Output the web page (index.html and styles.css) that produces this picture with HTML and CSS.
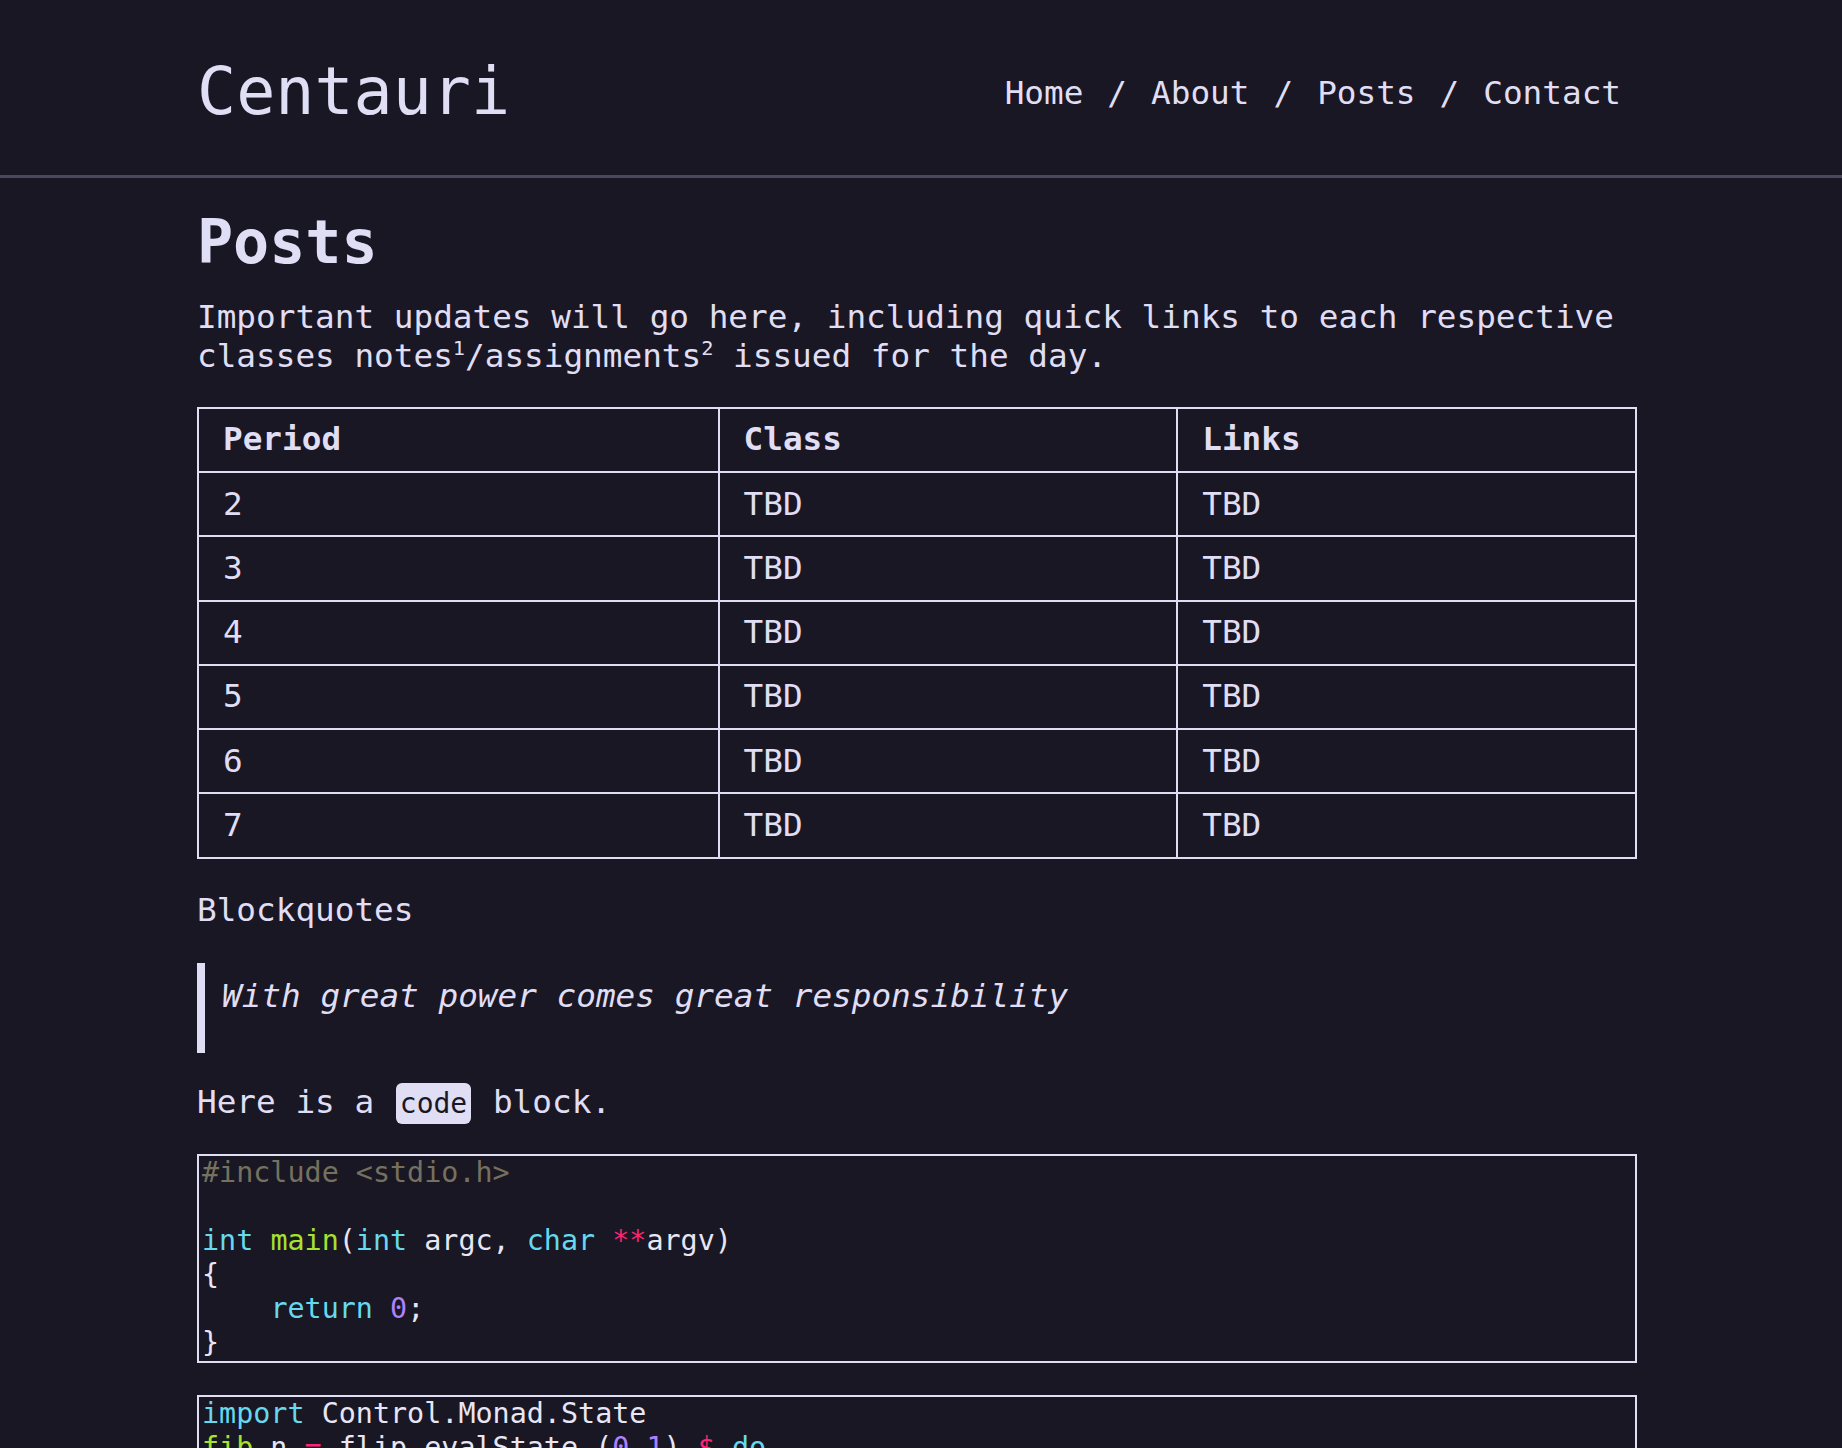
FILE: index.html
```html
<!DOCTYPE html>
<html lang="en">
<head>
<meta charset="utf-8">
<title>Posts | Centauri</title>
<link rel="stylesheet" href="styles.css">
</head>
<body>
<header class="site-header">
  <div class="wrap header-inner">
    <a class="brand" href="#">Centauri</a>
    <nav class="nav">
      <a href="#">Home</a><span class="sep">/</span><a href="#">About</a><span class="sep">/</span><a href="#">Posts</a><span class="sep">/</span><a href="#">Contact</a>
    </nav>
  </div>
</header>
<main class="wrap content">
  <h1 class="page-title">Posts</h1>
  <p class="lead">Important updates will go here, including quick links to each respective classes notes<sup>1</sup>/assignments<sup>2</sup> issued for the day.</p>

  <table class="schedule">
    <colgroup>
      <col class="col-period">
      <col class="col-class">
      <col class="col-links">
    </colgroup>
    <thead>
      <tr><th>Period</th><th>Class</th><th>Links</th></tr>
    </thead>
    <tbody>
      <tr><td>2</td><td>TBD</td><td>TBD</td></tr>
      <tr><td>3</td><td>TBD</td><td>TBD</td></tr>
      <tr><td>4</td><td>TBD</td><td>TBD</td></tr>
      <tr><td>5</td><td>TBD</td><td>TBD</td></tr>
      <tr><td>6</td><td>TBD</td><td>TBD</td></tr>
      <tr><td>7</td><td>TBD</td><td>TBD</td></tr>
    </tbody>
  </table>

  <p class="label">Blockquotes</p>

  <blockquote class="quote">
    <p>With great power comes great responsibility</p>
  </blockquote>

  <p class="inline-para">Here is a <code class="inline-code">code</code> block.</p>

  <pre class="code-block"><code><span class="c-pre">#include &lt;stdio.h&gt;</span>

<span class="c-kw">int</span> <span class="c-fn">main</span>(<span class="c-kw">int</span> argc, <span class="c-kw">char</span> <span class="c-op">**</span>argv)
{
    <span class="c-kw">return</span> <span class="c-num">0</span>;
}</code></pre>

  <pre class="code-block"><code><span class="c-kw">import</span> Control.Monad.State
<span class="c-fn">fib</span> n <span class="c-op">=</span> flip evalState (<span class="c-num">0</span>,<span class="c-num">1</span>) <span class="c-op">$</span> <span class="c-kw">do</span>
  forM [<span class="c-num">0</span><span class="c-op">..</span>(n<span class="c-op">-</span><span class="c-num">1</span>)] <span class="c-op">$</span> \_ <span class="c-op">-&gt;</span> <span class="c-kw">do</span>
    (a,b) <span class="c-op">&lt;-</span> get
    put (b,a<span class="c-op">+</span>b)
  (a,b) <span class="c-op">&lt;-</span> get
  <span class="c-kw">return</span> a</code></pre>
</main>
</body>
</html>
```

FILE: styles.css
```css
html, body {
  margin: 0;
  padding: 0;
}

body {
  background: #191724;
  color: #e0def4;
  font-family: "DejaVu Sans Mono", "Liberation Mono", monospace;
  font-size: 32.7px;
  line-height: 1.2;
}

a {
  color: inherit;
  text-decoration: none;
}

.wrap {
  width: 1440px;
  margin: 0 205px 0 197px;
}

/* Header */
.site-header {
  border-bottom: 3px solid #4b485e;
  padding: 53px 0 44px;
}

.header-inner {
  display: flex;
  align-items: center;
  justify-content: space-between;
}

.brand {
  font-size: 65px;
  font-weight: 400;
  line-height: 1.2;
}

.nav {
  display: flex;
  align-items: center;
  padding: 4px 16px 0 0;
}

.nav .sep {
  margin: 0 24px;
}

/* Content */
.content {
  padding-top: 28px;
}

.page-title {
  font-size: 60px;
  font-weight: 700;
  line-height: 1.2;
  margin: 0 0 20px;
}

p {
  margin: 32.5px 0;
}

.lead {
  margin: 0 0 30.5px;
}

sup {
  font-size: 0.62em;
  line-height: 0;
}

/* Table */
.schedule {
  width: 100%;
  table-layout: fixed;
  border-collapse: collapse;
  border: 2px solid #e0def4;
}

.col-period { width: 36.2%; }
.col-class { width: 31.9%; }
.col-links { width: 31.9%; }

.schedule th,
.schedule td {
  border: 2px solid #e0def4;
  padding: 11.5px 24px;
  text-align: left;
  vertical-align: middle;
}

.schedule th {
  font-weight: 700;
}

/* Blockquote */
.quote {
  margin: 32px 0 27px;
  border-left: 8px solid #e0def4;
  padding: 14px 0 37px 17px;
  font-style: italic;
}

.quote p {
  margin: 0;
}

.inline-para {
  margin: 29.5px 0 32px;
}

/* Inline code */
.inline-code {
  font-family: "DejaVu Sans Mono", "Liberation Mono", monospace;
  font-size: 28px;
  background: #e0def4;
  color: #191724;
  padding: 4px 4px;
  border-radius: 6px;
  margin: 0 2px;
}

/* Code blocks */
.code-block {
  margin: 32px 0;
  border: 2px solid #e0def4;
  padding: 0 3px 1px;
  font-family: "DejaVu Sans Mono", "Liberation Mono", monospace;
  font-size: 28.4px;
  line-height: 1.2;
  white-space: pre;
  overflow: hidden;
  color: #e8e6f5;
}

.code-block code {
  font-family: inherit;
  font-size: inherit;
}

.c-pre { color: #75715e; }
.c-kw { color: #66d9ef; }
.c-fn { color: #a6e22e; }
.c-op { color: #f92672; }
.c-num { color: #ae81ff; }
```
